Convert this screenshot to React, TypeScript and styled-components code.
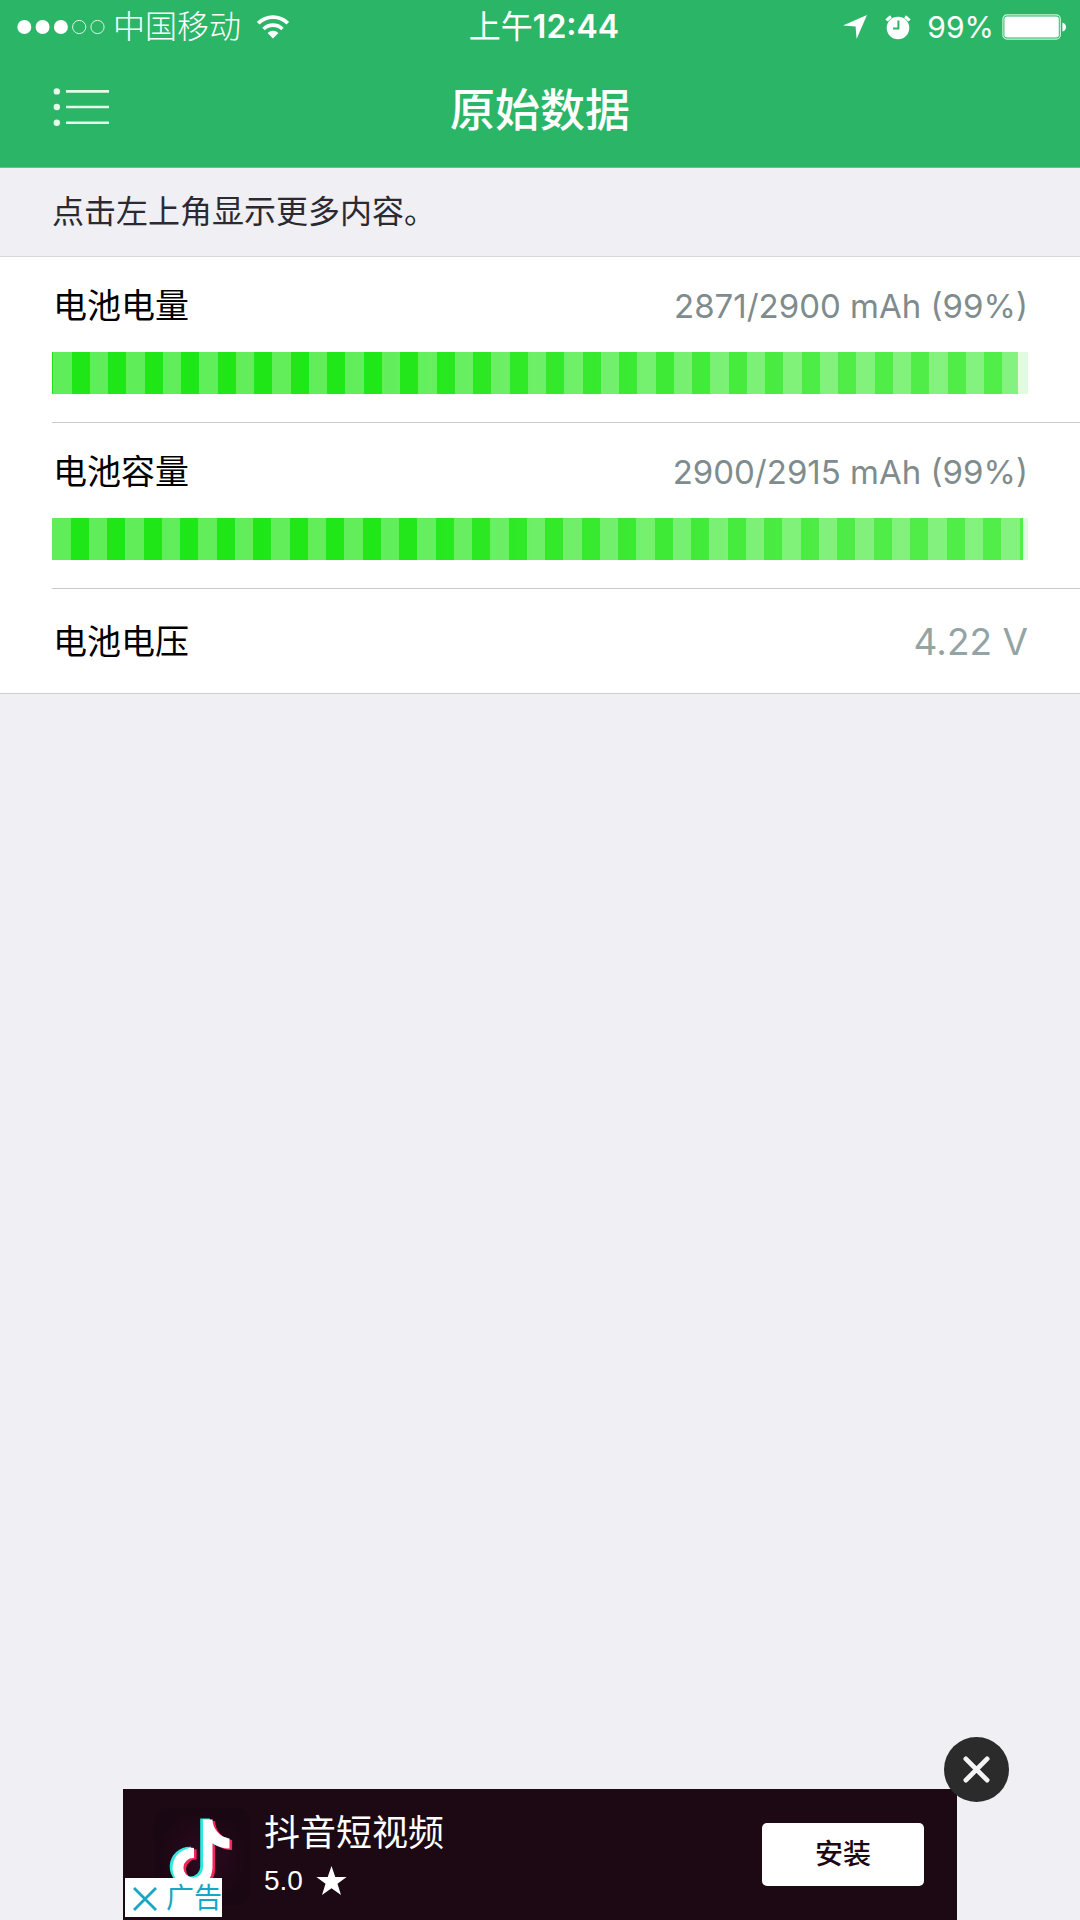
import React from "react";
import styled, { createGlobalStyle } from "styled-components";

const GlobalStyle = createGlobalStyle`
  *, *::before, *::after { box-sizing: border-box; }
  body {
    margin: 0;
    background: #efeff4;
    color: #000;
    font-family: Inter, "Noto Sans CJK SC", sans-serif;
  }
  button { font-family: inherit; border: 0; padding: 0; cursor: pointer; }
  h1, h2, p, ul { margin: 0; padding: 0; }
`;

const Page = styled.div`
  display: flex;
  flex-direction: column;
  min-height: 100vh;
`;

const Header = styled.header`
  background: #2bb566;
  color: #fff;
  border-bottom: 1px solid #7fb497;
`;

const StatusBar = styled.div`
  display: grid;
  grid-template-columns: 1fr auto 1fr;
  align-items: center;
  height: 54px;
  padding: 0 13px 0 17px;
  font-size: 30px;
  line-height: 54px;
`;

const StatusGroup = styled.div<{ $end?: boolean }>`
  display: flex;
  align-items: center;
  justify-content: ${(p) => (p.$end ? "flex-end" : "flex-start")};
  gap: ${(p) => (p.$end ? 8 : 6)}px;

  svg { display: block; flex: none; }
`;

const Carrier = styled.span`
  margin-right: 10px;
  font-size: 32px;
  font-weight: 300;
`;

const Clock = styled.time`
  padding-left: 4px;
  font-size: 32px;
  font-weight: 600;
`;

const ClockPeriod = styled.span`
  font-weight: 400;
`;

const AlarmSlot = styled.span`
  margin: 0 8px 0 10px;
`;

const NavBar = styled.div`
  display: grid;
  grid-template-columns: 1fr auto 1fr;
  align-items: center;
  height: 113px;
  padding: 0 52px;
`;

const MenuButton = styled.button`
  justify-self: start;
  width: 58px;
  height: 44px;
  margin-bottom: 8px;
  background: none;
  color: #e4fbe9;

  svg { display: block; }
`;

const Title = styled.h1`
  font-size: 45px;
  font-weight: 500;
  line-height: 64px;
`;

const Hint = styled.p`
  padding: 20px 52px;
  border-bottom: 1px solid #d6d6da;
  color: #2b2a30;
  font-size: 32px;
  line-height: 48px;
`;

const List = styled.ul`
  list-style: none;
  padding-left: 52px;
  background: #fff;
  border-bottom: 1px solid #cdcdd1;
`;

const Item = styled.li`
  padding-right: 52px;

  & + & { border-top: 1px solid #cbcbcf; }
`;

const ItemHead = styled.div<{ $tall?: boolean }>`
  display: flex;
  align-items: center;
  justify-content: space-between;
  height: ${(p) => (p.$tall ? 104 : 95)}px;
  padding-top: 2px;
`;

const Label = styled.h2`
  padding-left: 1px;
  font-size: 34px;
  font-weight: 400;
  line-height: 48px;
`;

const Value = styled.span<{ $large?: boolean }>`
  color: ${(p) => (p.$large ? "#94a3a4" : "#7f8c8d")};
  font-size: ${(p) => (p.$large ? 37 : 33)}px;
  line-height: 48px;
`;

const Track = styled.div`
  height: 42px;
  margin-bottom: 28px;
  background: #e0fbdf;
`;

const Fill = styled.div<{ $edge: boolean }>`
  height: 100%;
  background:
    ${(p) =>
      p.$edge
        ? `repeating-linear-gradient(90deg,
            transparent 0 1px, #ffffff4a 1px 20px, transparent 20px 38px,
            #ffffff4a 38px 56px, transparent 56px 73px)`
        : `repeating-linear-gradient(90deg,
            #ffffff4a 0 19px, transparent 19px 37px,
            #ffffff4a 37px 55px, transparent 55px 73px)`},
    linear-gradient(90deg, #1fe616 0%, #20e717 33%, #4fec47 80%, #51ed49 100%);
`;

const Ad = styled.aside`
  position: relative;
  display: flex;
  align-items: center;
  width: 834px;
  max-width: 100%;
  height: 131px;
  margin: auto auto 0;
  padding: 0 33px 0 31px;
  background: #1d0914;
  color: #fff;
`;

const AppIcon = styled.svg`
  flex: none;
  margin-top: 3px;
`;

const AppInfo = styled.div`
  flex: 1;
  padding: 4px 0 0 13px;
`;

const AppName = styled.p`
  font-family: "Liberation Sans", "Noto Sans CJK SC", sans-serif;
  font-size: 36px;
  line-height: 48px;
`;

const Rating = styled.p`
  display: flex;
  align-items: center;
  gap: 13px;
  font-family: "Liberation Sans", "Noto Sans CJK SC", sans-serif;
  font-size: 28px;
  line-height: 46px;
`;

const InstallButton = styled.button`
  width: 162px;
  height: 63px;
  padding-bottom: 6px;
  border-radius: 5px;
  background: #fff;
  color: #1d0914;
  font-size: 28px;
  font-weight: 500;
`;

const CloseButton = styled.button`
  position: absolute;
  top: -52px;
  right: -52px;
  display: grid;
  place-items: center;
  width: 65px;
  height: 65px;
  border-radius: 50%;
  background: #2b2b2b;
`;

const AdBadge = styled.button`
  position: absolute;
  left: 2px;
  bottom: 3px;
  display: flex;
  align-items: center;
  gap: 9px;
  width: 97px;
  height: 39px;
  padding: 2px 0 0 8px;
  overflow: hidden;
  background: #fff;
  color: #17a6c4;
  font-size: 28px;
  line-height: 39px;
  white-space: nowrap;

  svg { flex: none; }
`;

const SignalDots = () => (
  <svg width="90" height="16" viewBox="0 0 90 16" aria-hidden="true">
    {[0, 1, 2, 3, 4].map((i) => (
      <circle
        key={i}
        cx={7.3 + i * 18.3}
        cy="8"
        r={i < 3 ? 7 : 6.6}
        fill={i < 3 ? "#fff" : "none"}
        stroke={i < 3 ? "none" : "#d9f8e2"}
      />
    ))}
  </svg>
);

const WifiIcon = () => (
  <svg width="32" height="24" viewBox="0 0 32 24" aria-hidden="true">
    <g fill="none" stroke="#fff" strokeWidth="3.6">
      <path d="M1.2 8.2 A21 21 0 0 1 30.8 8.2" />
      <path d="M6.6 14 A13.4 13.4 0 0 1 25.4 14" />
    </g>
    <path d="M10.6 18 A7.6 7.6 0 0 1 21.4 18 L16 23.4 Z" fill="#fff" />
  </svg>
);

const LocationIcon = () => (
  <svg width="24" height="24" viewBox="0 0 24 24" aria-hidden="true">
    <path d="M24 0 L13.6 24 L12.6 11.4 L0 10.4 Z" fill="#fff" />
  </svg>
);

const AlarmIcon = () => (
  <svg width="26" height="25" viewBox="0 0 26 25" aria-hidden="true">
    <circle cx="13" cy="13" r="11.3" fill="#fff" />
    <path d="M1.6 5.6 A14 14 0 0 1 6 1.6" fill="none" stroke="#fff" strokeWidth="3.2" />
    <path d="M20 1.6 A14 14 0 0 1 24.4 5.6" fill="none" stroke="#fff" strokeWidth="3.2" />
    <path d="M13.4 5.4 V13.6 H8" fill="none" stroke="#2bb566" strokeWidth="2" />
  </svg>
);

const BatteryIcon = () => (
  <svg width="65" height="26" viewBox="0 0 65 26" aria-hidden="true">
    <rect x="0.9" y="0.9" width="57.4" height="24.2" rx="4" fill="none" stroke="#c9f5d6" strokeWidth="1.2" />
    <rect x="2.4" y="2.4" width="54.4" height="21.2" rx="2.4" fill="#fff" />
    <path d="M60.4 8.4 C65.2 9.4 65.2 16.6 60.4 17.6 Z" fill="#fff" />
  </svg>
);

const ListIcon = () => (
  <svg width="58" height="44" viewBox="0 0 58 44" aria-hidden="true">
    {[6.4, 22, 37.8].map((y) => (
      <g key={y}>
        <circle cx="4.8" cy={y} r="3.2" fill="currentColor" />
        <path d={`M14 ${y} H57`} stroke="currentColor" strokeWidth="2.6" />
      </g>
    ))}
  </svg>
);

const notePath =
  "M49 11 H58.5 C58.5 20 66 29 75.5 30 V40 C69 40 63 38 58.5 34.5 V59 A20 20 0 1 1 40 39.3 V49.5 A9.8 9.8 0 1 0 49 59 Z";

const NoteLogo = () => (
  <AppIcon width="97" height="97" viewBox="0 0 97 97" aria-hidden="true">
    <defs>
      <radialGradient id="tile">
        <stop offset="0" stopColor="#2d0a20" />
        <stop offset="1" stopColor="#190712" />
      </radialGradient>
    </defs>
    <rect width="97" height="97" rx="14" fill="url(#tile)" />
    <path d={notePath} fill="#f5245b" transform="translate(2.6 2)" />
    <path d={notePath} fill="#2ee9df" transform="translate(-2.8 -0.6)" />
    <path d={notePath} fill="#fff" transform="translate(0 0.6)" />
  </AppIcon>
);

const StarIcon = () => (
  <svg width="31" height="30" viewBox="0 0 31 30" aria-hidden="true">
    <path
      d="M15.5 0 L19.3 11 H30.6 L21.5 17.8 L25 29 L15.5 22.2 L6 29 L9.5 17.8 L0.4 11 H11.7 Z"
      fill="#fff"
    />
  </svg>
);

interface Reading {
  label: string;
  value: string;
  current?: number;
  max?: number;
}

const readings: Reading[] = [
  { label: "电池电量", value: "2871/2900 mAh (99%)", current: 2871, max: 2900 },
  { label: "电池容量", value: "2900/2915 mAh (99%)", current: 2900, max: 2915 },
  { label: "电池电压", value: "4.22 V" },
];

const ReadingItem = ({ reading, edge }: { reading: Reading; edge: boolean }) => {
  const { label, value, current, max } = reading;
  const hasBar = current !== undefined && max !== undefined;
  return (
    <Item>
      <ItemHead $tall={!hasBar}>
        <Label>{label}</Label>
        <Value $large={!hasBar}>{value}</Value>
      </ItemHead>
      {hasBar && (
        <Track role="meter" aria-label={label} aria-valuemin={0} aria-valuemax={max} aria-valuenow={current}>
          <Fill $edge={edge} style={{ width: `${(current / max) * 100}%` }} />
        </Track>
      )}
    </Item>
  );
};

export default function App() {
  return (
    <Page lang="zh-CN">
      <GlobalStyle />
      <Header>
        <StatusBar>
          <StatusGroup>
            <SignalDots />
            <Carrier>中国移动</Carrier>
            <WifiIcon />
          </StatusGroup>
          <Clock>
            <ClockPeriod>上午</ClockPeriod>12:44
          </Clock>
          <StatusGroup $end>
            <LocationIcon />
            <AlarmSlot>
              <AlarmIcon />
            </AlarmSlot>
            <span>99%</span>
            <BatteryIcon />
          </StatusGroup>
        </StatusBar>
        <NavBar>
          <MenuButton type="button" aria-label="菜单">
            <ListIcon />
          </MenuButton>
          <Title>原始数据</Title>
        </NavBar>
      </Header>
      <main>
        <Hint>点击左上角显示更多内容。</Hint>
        <List>
          {readings.map((r, i) => (
            <ReadingItem key={r.label} reading={r} edge={i === 0} />
          ))}
        </List>
      </main>
      <Ad>
        <NoteLogo />
        <AppInfo>
          <AppName>抖音短视频</AppName>
          <Rating>
            5.0 <StarIcon />
          </Rating>
        </AppInfo>
        <InstallButton type="button">安装</InstallButton>
        <AdBadge type="button">
          <svg width="24" height="24" viewBox="0 0 24 24" aria-hidden="true">
            <path d="M1 1 L23 23 M23 1 L1 23" stroke="currentColor" strokeWidth="2.8" />
          </svg>
          广告
        </AdBadge>
        <CloseButton type="button" aria-label="关闭">
          <svg width="27" height="27" viewBox="0 0 28 28" aria-hidden="true">
            <path d="M3 3 L25 25 M25 3 L3 25" stroke="#f4f4f6" strokeWidth="5" strokeLinecap="round" />
          </svg>
        </CloseButton>
      </Ad>
    </Page>
  );
}
